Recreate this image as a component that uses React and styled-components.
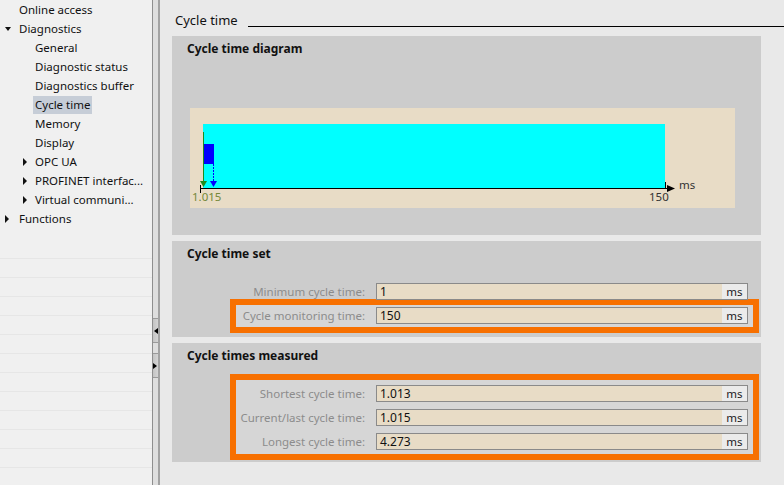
import React from 'react';
import styled, { createGlobalStyle } from 'styled-components';

const Global = createGlobalStyle`
  html, body {
    margin: 0;
    padding: 0;
    background: #e9e9e9;
    font-family: "Noto Sans", "Open Sans", sans-serif;
  }
`;

const Layout = styled.div`
  display: flex;
  height: 485px;
  overflow: hidden;
`;

const Sidebar = styled.div`
  width: 152px;
  background: #f0f0f0;
  display: flex;
  flex-direction: column;
`;

const TreeRow = styled.div`
  height: 19px;
  display: flex;
  align-items: center;
  padding-left: ${(p) => (p.$level ? 23 : 5)}px;
  font-size: 11.5px;
  color: #111;
  white-space: nowrap;
`;

const Toggle = styled.span`
  width: ${(p) => (p.$level ? 12 : 14)}px;
  flex: none;
  display: flex;
  align-items: center;
  &::before {
    content: '';
    display: ${(p) => (p.$state ? 'block' : 'none')};
    border-style: solid;
    border-color: transparent;
    ${(p) =>
      p.$state === 'open'
        ? 'border-width: 4px 3.5px 0 3.5px; border-top-color: #111;'
        : 'border-width: 4px 0 4px 4px; border-left-color: #111;'}
  }
`;

const TreeLabel = styled.span`
  height: 18px;
  line-height: 18px;
  margin-left: -2px;
  padding: 0 2px;
  background: ${(p) => (p.$selected ? '#c6cdd7' : 'transparent')};
`;

const Filler = styled.div`
  flex: 1;
  padding-top: 12px;
  background-origin: content-box;
  background-clip: content-box;
  background-image: repeating-linear-gradient(
    to bottom,
    transparent 0,
    transparent 18px,
    #e6e6e6 18px,
    #e6e6e6 19px
  );
`;

const Splitter = styled.div`
  width: 5px;
  border-left: 1px solid #8e8e8e;
  border-right: 2px solid #a2a2a2;
  background: #dedede;
  display: flex;
  flex-direction: column;
  gap: 10px;
  padding-top: 318px;
`;

const SplitBtn = styled.div`
  height: 23px;
  border-top: 1px solid #9a9a9a;
  border-bottom: 1px solid #9a9a9a;
  background: linear-gradient(to right, #c4c4c4, #d4d4d4);
  display: flex;
  align-items: center;
  justify-content: ${(p) => (p.$dir === 'left' ? 'flex-end' : 'flex-start')};
  &::before {
    content: '';
    border-style: solid;
    border-color: transparent;
    ${(p) =>
      p.$dir === 'left'
        ? 'border-width: 3.5px 4px 3.5px 0; border-right-color: #000;'
        : 'border-width: 3.5px 0 3.5px 4px; border-left-color: #000;'}
  }
`;

const Main = styled.div`
  flex: 1;
  padding-left: 12px;
  background: #e9e9e9;
`;

const Heading = styled.div`
  height: 36px;
  box-sizing: border-box;
  padding: 12px 0 0 3px;
  display: flex;
  font-size: 13px;
  line-height: 16px;
  color: #111;
`;

const HeadingRule = styled.div`
  flex: 1;
  height: 1px;
  margin: 14px 0 0 10px;
  background: #000;
`;

const Panel = styled.section`
  width: 589px;
  background: #cccccc;
  padding: 5px 0 ${(p) => p.$pb}px 0;
  margin-bottom: 6px;
`;

const PanelTitle = styled.div`
  padding-left: 15px;
  font-size: 12px;
  font-weight: bold;
  line-height: 16px;
  color: #111;
`;

const DiagramBox = styled.div`
  margin: 51px 0 0 18px;
  width: 545px;
  height: 100px;
  background: #e8dcc6;
  svg {
    display: block;
    font-family: "Noto Sans", sans-serif;
  }
`;

const Highlight = styled.div`
  margin: ${(p) => p.$mt}px 2px 0 58px;
  border: 6px solid #f77000;
  background: #d6d6d6;
  padding: ${(p) => p.$pad};
  display: flex;
  flex-direction: column;
  gap: 7px;
`;

const FieldRow = styled.div`
  display: flex;
  align-items: center;
  gap: 11px;
  padding-right: 5px;
  ${(p) => p.$plain && 'margin: 21px 8px -1px 64px;'}
`;

const FieldLabel = styled.span`
  width: 129px;
  flex: none;
  text-align: right;
  font-size: 11.5px;
  color: #8c8c8c;
  white-space: nowrap;
`;

const Input = styled.div`
  flex: 1;
  height: 17px;
  box-sizing: border-box;
  border: 1px solid #8a8a8a;
  background: #e8dcc6;
  display: flex;
`;

const Value = styled.span`
  flex: 1;
  padding-left: 3px;
  font-size: 12px;
  line-height: 15px;
  color: #111;
`;

const Unit = styled.span`
  width: 25px;
  background: #ebebeb;
  text-align: center;
  font-size: 11.5px;
  line-height: 15px;
  color: #222;
`;

const tree = [
  { label: 'Online access', level: 0 },
  { label: 'Diagnostics', level: 0, state: 'open' },
  { label: 'General', level: 1 },
  { label: 'Diagnostic status', level: 1 },
  { label: 'Diagnostics buffer', level: 1 },
  { label: 'Cycle time', level: 1, selected: true },
  { label: 'Memory', level: 1 },
  { label: 'Display', level: 1 },
  { label: 'OPC UA', level: 1, state: 'closed' },
  { label: 'PROFINET interfac...', level: 1, state: 'closed' },
  { label: 'Virtual communi...', level: 1, state: 'closed' },
  { label: 'Functions', level: 0, state: 'closed' },
];

function Field({ label, value, plain }) {
  return (
    <FieldRow $plain={plain}>
      <FieldLabel>{label}</FieldLabel>
      <Input>
        <Value>{value}</Value>
        <Unit>ms</Unit>
      </Input>
    </FieldRow>
  );
}

function Diagram() {
  return (
    <svg width="545" height="100">
      <rect x="13" y="16" width="462" height="64" fill="#00ffff" />
      <line x1="13.5" y1="24" x2="13.5" y2="75" stroke="#1e8a1e" />
      <rect x="14" y="36" width="10" height="20" fill="#0000ff" />
      <line x1="23.5" y1="56" x2="23.5" y2="75" stroke="#0000ff" strokeDasharray="2 1" />
      <polygon points="10,73 17,73 13.5,79" fill="#1e8a1e" />
      <polygon points="20,73 27,73 23.5,79" fill="#0000ff" />
      <line x1="10" y1="80.5" x2="478" y2="80.5" stroke="#000" />
      <line x1="10.5" y1="77" x2="10.5" y2="85" stroke="#000" />
      <line x1="475.5" y1="74" x2="475.5" y2="80" stroke="#000" />
      <polygon points="477,77 485,80.5 477,84" fill="#000" />
      <text x="489" y="81" fontSize="11.5" fill="#333">ms</text>
      <text x="459" y="93" fontSize="11.5" fill="#333">150</text>
      <text x="2" y="93" fontSize="11.5" fill="#74883a">1.015</text>
    </svg>
  );
}

export default function App() {
  return (
    <Layout>
      <Global />
      <Sidebar>
        {tree.map((item) => (
          <TreeRow key={item.label} $level={item.level}>
            <Toggle $level={item.level} $state={item.state} />
            <TreeLabel $selected={item.selected}>{item.label}</TreeLabel>
          </TreeRow>
        ))}
        <Filler />
      </Sidebar>
      <Splitter>
        <SplitBtn $dir="left" />
        <SplitBtn $dir="right" />
      </Splitter>
      <Main>
        <Heading>
          Cycle time
          <HeadingRule />
        </Heading>
        <Panel $pb={27}>
          <PanelTitle>Cycle time diagram</PanelTitle>
          <DiagramBox>
            <Diagram />
          </DiagramBox>
        </Panel>
        <Panel $pb={4}>
          <PanelTitle>Cycle time set</PanelTitle>
          <Field plain label="Minimum cycle time:" value="1" />
          <Highlight $mt={0} $pad="2px 0 3px 0">
            <Field label="Cycle monitoring time:" value="150" />
          </Highlight>
        </Panel>
        <Panel $pb={2}>
          <PanelTitle>Cycle times measured</PanelTitle>
          <Highlight $mt={10} $pad="5px 0 4px 0">
            <Field label="Shortest cycle time:" value="1.013" />
            <Field label="Current/last cycle time:" value="1.015" />
            <Field label="Longest cycle time:" value="4.273" />
          </Highlight>
        </Panel>
      </Main>
    </Layout>
  );
}
